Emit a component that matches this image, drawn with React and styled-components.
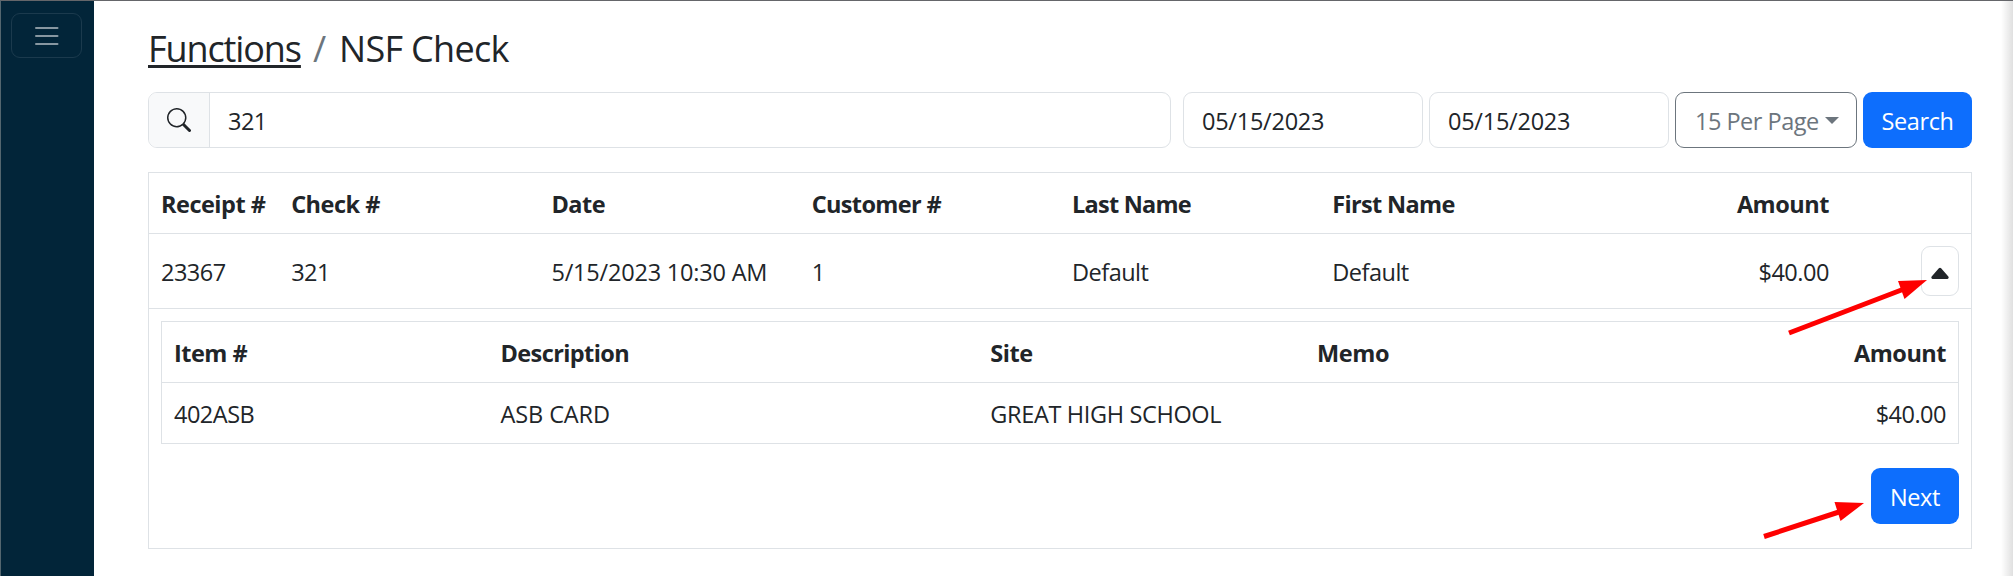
import React from 'react'
import styled, { createGlobalStyle } from "styled-components"

const columns = [
    { head: "Receipt #", value: "23367", track: -0.5 },
    { head: "Check #", value: "321", track: -0.5 },
    { head: "Date", value: "5/15/2023 10:30 AM", track: -0.5, valueTrack: -0.2 },
    { head: "Customer #", value: "1", track: -0.65 },
    { head: "Last Name", value: "Default", track: -0.75 },
    { head: "First Name", value: "Default", track: -0.65 },
    { head: "Amount", value: "$40.00", right: true, track: -0.5 },
]

const items = [
    { head: "Item #", value: "402ASB", track: -0.5 },
    { head: "Description", value: "ASB CARD", track: -0.6, valueTrack: -0.1 },
    { head: "Site", value: "GREAT HIGH SCHOOL", track: -0.5, valueTrack: -0.35 },
    { head: "Memo", value: "", track: -0.35 },
    { head: "Amount", value: "$40.00", right: true, track: -0.5 },
]

function App() {
    return (
        <Page>
            <GlobalStyle />
            <Sidebar>
                <MenuButton>
                    <svg width="30" height="30" viewBox="0 0 30 30">
                        <path stroke="currentColor" strokeLinecap="round" strokeMiterlimit="10" strokeWidth="2" d="M4 7h21.5M4 15h21.5M4 23h21.5" />
                    </svg>
                </MenuButton>
            </Sidebar>
            <Content>
                <Breadcrumb>
                    <CrumbLink>Functions</CrumbLink>
                    <Slash>/</Slash>
                    <Crumb>NSF Check</Crumb>
                </Breadcrumb>
                <Toolbar>
                    <SearchGroup>
                        <SearchIcon>
                            <svg width="24" height="24" viewBox="0 0 16 16" fill="currentColor">
                                <path d="M11.742 10.344a6.5 6.5 0 1 0-1.397 1.398h-.001q.044.06.098.115l3.85 3.85a1 1 0 0 0 1.415-1.414l-3.85-3.85a1 1 0 0 0-.115-.1zM12 6.5a5.5 5.5 0 1 1-11 0 5.5 5.5 0 0 1 11 0" />
                            </svg>
                        </SearchIcon>
                        <SearchText>321</SearchText>
                    </SearchGroup>
                    <DateField>05/15/2023</DateField>
                    <DateField>05/15/2023</DateField>
                    <PageSize>15 Per Page<CaretDown /></PageSize>
                    <Button $width="109px">Search</Button>
                </Toolbar>
                <Table>
                    <HeadRow>
                        {columns.map(col => (
                            <Cell key={col.head} $right={col.right} $track={col.track}>{col.head}</Cell>
                        ))}
                    </HeadRow>
                    <Row>
                        {columns.map(col => (
                            <Cell key={col.head} $right={col.right} $track={col.valueTrack || -0.5}>{col.value}</Cell>
                        ))}
                        <ToggleCell>
                            <Toggle>
                                <svg width="24" height="24" viewBox="0 0 16 16" fill="currentColor">
                                    <path d="m7.247 4.86-4.796 5.481c-.566.647-.106 1.659.753 1.659h9.592a1 1 0 0 0 .753-1.659l-4.796-5.48a1 1 0 0 0-1.506 0z" />
                                </svg>
                            </Toggle>
                        </ToggleCell>
                    </Row>
                    <Detail>
                        <ItemTable>
                            <ItemHead>
                                {items.map(item => (
                                    <Cell key={item.head} $right={item.right} $track={item.track}>{item.head}</Cell>
                                ))}
                            </ItemHead>
                            <ItemRow>
                                {items.map(item => (
                                    <Cell key={item.head} $right={item.right} $track={item.valueTrack || -0.5}>{item.value}</Cell>
                                ))}
                            </ItemRow>
                        </ItemTable>
                        <Button $width="88px">Next</Button>
                    </Detail>
                </Table>
            </Content>
            <EdgeShadow />
            <Arrows width="2013" height="576" viewBox="0 0 2013 576">
                <path d="M1789 333L1904 289M1764 536.5L1842 511" />
                <polygon points="1927,280 1898,281 1904.5,299" />
                <polygon points="1864,503 1834.5,502 1840.5,521" />
            </Arrows>
        </Page>
    )
}

const GlobalStyle = createGlobalStyle`
* {
    box-sizing: border-box;
}
body {
    margin: 0;
    background: white;
}
`
const Page = styled.div`
position: relative;
display: flex;
width: 2013px;
height: 576px;
overflow: hidden;
border-top: 1px solid #65666a;
border-left: 1px solid #53666f;
color: #212529;
font-family: "Open Sans", sans-serif;
font-size: 23.5px;
line-height: 36px;
white-space: nowrap;
`
const Sidebar = styled.div`
flex: 0 0 93px;
padding: 12px 0 0 10px;
background: #022539;
`
const MenuButton = styled.div`
display: flex;
align-items: center;
justify-content: center;
width: 71px;
height: 45px;
padding-top: 1px;
border: 1px solid #1b3a4d;
border-radius: 9px;
color: #8797a1;
svg {
    fill: none;
}
`
const Content = styled.div`
flex: 1;
padding: 19px 41px 0 54px;
`
const Breadcrumb = styled.div`
display: flex;
height: 72px;
font-size: 36px;
line-height: 57px;
`
const CrumbLink = styled.span`
letter-spacing: -1.1px;
text-decoration: underline;
text-decoration-thickness: 3px;
text-underline-offset: 3px;
text-decoration-skip-ink: none;
`
const Slash = styled.span`
margin: 0 13px 0 12px;
color: #6c757d;
`
const Crumb = styled.span`
letter-spacing: -0.7px;
`
const Toolbar = styled.div`
display: flex;
gap: 6px;
height: 56px;
letter-spacing: -0.5px;
`
const Field = styled.div`
display: flex;
align-items: center;
border: 1px solid #dee2e6;
border-radius: 9px;
`
const SearchGroup = styled(Field)`
flex: 1;
margin-right: 6px;
overflow: hidden;
`
const SearchIcon = styled.div`
display: flex;
align-items: center;
justify-content: center;
width: 61px;
height: 100%;
border-right: 1px solid #dee2e6;
background: #f8f9fa;
`
const SearchText = styled.div`
padding: 1px 0 0 18px;
`
const DateField = styled(Field)`
width: 240px;
padding: 1px 18px 0;
letter-spacing: -0.25px;
`
const PageSize = styled(Field)`
width: 182px;
padding: 1px 0 0 19px;
border-color: #6c757d;
color: #6c757d;
`
const CaretDown = styled.i`
margin: 0 0 0 6px;
border-top: 7px solid #6c757d;
border-left: 7px solid transparent;
border-right: 7px solid transparent;
`
const Button = styled.div`
display: flex;
align-items: center;
justify-content: center;
width: ${props => props.$width};
height: 56px;
padding-top: 1px;
border-radius: 9px;
background: #0d6efd;
color: white;
letter-spacing: -0.4px;
`
const Table = styled.div`
height: 377px;
margin-top: 24px;
border: 1px solid #dee2e6;
`
const Row = styled.div`
display: grid;
grid-template-columns: 1fr repeat(6, 2fr) 1fr;
align-items: center;
height: 75px;
border-bottom: 1px solid #dee2e6;
`
const HeadRow = styled(Row)`
height: 61px;
font-weight: 700;
`
const Cell = styled.div`
min-width: 0;
padding: 1px 12px 0;
letter-spacing: ${props => props.$track}px;
text-align: ${props => props.$right ? "right" : "left"};
`
const ToggleCell = styled.div`
display: flex;
justify-content: flex-end;
padding-right: 12px;
`
const Toggle = styled.div`
display: flex;
align-items: center;
justify-content: center;
width: 38px;
height: 50px;
padding-top: 4px;
border: 1px solid #dee2e6;
border-radius: 9px;
`
const Detail = styled.div`
display: flex;
flex-direction: column;
align-items: flex-end;
gap: 24px;
padding: 12px;
`
const ItemTable = styled.div`
width: 100%;
border: 1px solid #dee2e6;
`
const ItemRow = styled.div`
display: grid;
grid-template-columns: 2fr 3fr 2fr 2fr 2fr;
align-items: center;
height: 60px;
`
const ItemHead = styled(ItemRow)`
height: 61px;
border-bottom: 1px solid #dee2e6;
font-weight: 700;
`
const EdgeShadow = styled.div`
position: absolute;
top: 0;
right: 0;
width: 12px;
height: 100%;
background: linear-gradient(to right, rgba(0, 0, 0, 0), rgba(0, 0, 0, 0.12));
`
/* callouts drawn over the page */
const Arrows = styled.svg`
position: absolute;
top: -1px;
left: -1px;
fill: #fe0000;
path {
    stroke: #fe0000;
    stroke-width: 5;
}
`
export default App
